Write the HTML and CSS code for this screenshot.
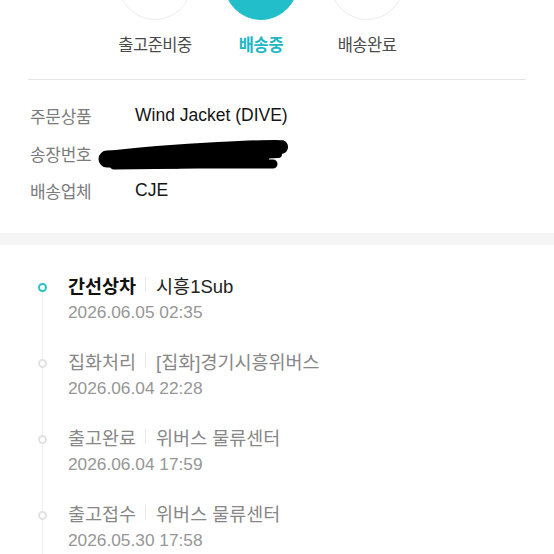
FILE: index.html
```html
<!DOCTYPE html>
<html lang="ko">
<head>
<meta charset="utf-8">
<link rel="stylesheet" href="styles.css">
</head>
<body>
<div class="page">
  <div class="steps">
    <div class="step">
      <div class="circle"></div>
      <div class="step-label">출고준비중</div>
    </div>
    <div class="step">
      <div class="circle active"></div>
      <div class="step-label active">배송중</div>
    </div>
    <div class="step">
      <div class="circle"></div>
      <div class="step-label">배송완료</div>
    </div>
  </div>
  <div class="divider"></div>

  <div class="info">
    <div class="row">
      <div class="label">주문상품</div>
      <div class="value">Wind Jacket (DIVE)</div>
    </div>
    <div class="row">
      <div class="label">송장번호</div>
      <div class="value">
        <svg class="scribble" width="192" height="34" viewBox="0 0 192 34">
          <path d="M9 20 Q60 14 120 11 T183 9" fill="none" stroke="#000" stroke-width="14" stroke-linecap="round"/>
          <path d="M9 21 L80 22" fill="none" stroke="#000" stroke-width="17" stroke-linecap="round"/>
          <path d="M60 22 L165 19" fill="none" stroke="#000" stroke-width="13" stroke-linecap="round"/>
          <path d="M16 27 L100 26 L175 26" fill="none" stroke="#000" stroke-width="9" stroke-linecap="round"/>
          <path d="M120 19 L180 16" fill="none" stroke="#000" stroke-width="8" stroke-linecap="round"/>
        </svg>
      </div>
    </div>
    <div class="row">
      <div class="label">배송업체</div>
      <div class="value">CJE</div>
    </div>
  </div>

  <div class="band"></div>

  <div class="timeline">
    <div class="item current">
      <div class="marker">
        <div class="line-top"></div>
        <div class="dot"></div>
        <div class="line-bottom"></div>
      </div>
      <div class="content">
        <div class="title"><span class="status">간선상차</span><span class="sep"></span><span class="place">시흥1Sub</span></div>
        <div class="date">2026.06.05 02:35</div>
      </div>
    </div>
    <div class="item">
      <div class="marker">
        <div class="line-top"></div>
        <div class="dot"></div>
        <div class="line-bottom"></div>
      </div>
      <div class="content">
        <div class="title"><span class="status">집화처리</span><span class="sep"></span><span class="place">[집화]경기시흥위버스</span></div>
        <div class="date">2026.06.04 22:28</div>
      </div>
    </div>
    <div class="item">
      <div class="marker">
        <div class="line-top"></div>
        <div class="dot"></div>
        <div class="line-bottom"></div>
      </div>
      <div class="content">
        <div class="title"><span class="status">출고완료</span><span class="sep"></span><span class="place">위버스 물류센터</span></div>
        <div class="date">2026.06.04 17:59</div>
      </div>
    </div>
    <div class="item">
      <div class="marker">
        <div class="line-top"></div>
        <div class="dot"></div>
        <div class="line-bottom"></div>
      </div>
      <div class="content">
        <div class="title"><span class="status">출고접수</span><span class="sep"></span><span class="place">위버스 물류센터</span></div>
        <div class="date">2026.05.30 17:58</div>
      </div>
    </div>
  </div>
</div>
</body>
</html>
```

FILE: styles.css
```css
html, body {
  margin: 0;
  padding: 0;
  background: #ffffff;
}

body {
  font-family: "Liberation Sans", "Noto Sans CJK KR", sans-serif;
  color: #111;
  width: 554px;
  height: 554px;
  overflow: hidden;
}

.page {
  width: 554px;
}

/* steps */
.steps {
  display: flex;
  padding-left: 102px;
}

.step {
  width: 106px;
  display: flex;
  flex-direction: column;
  align-items: center;
}

.circle {
  width: 74px;
  height: 74px;
  margin-top: -54px;
  border-radius: 50%;
  border: 1px solid #ececec;
  box-sizing: border-box;
  background: #fff;
}

.circle.active {
  background: #22bfca;
  border-color: #22bfca;
}

.step-label {
  margin-top: 13px;
  font-family: "Noto Sans CJK KR", sans-serif;
  font-size: 16.5px;
  line-height: 22px;
  letter-spacing: -0.5px;
  color: #4a4a4a;
  white-space: nowrap;
}

.step-label.active {
  color: #1db8c4;
  font-weight: 700;
  letter-spacing: -0.3px;
}

.divider {
  margin: 24px 28px 0;
  height: 1px;
  background: #e6e6e6;
}

/* info */
.info {
  padding: 17px 30px 23px;
}

.row {
  display: flex;
  align-items: center;
  height: 37.5px;
}

.label {
  width: 105px;
  font-family: "Noto Sans CJK KR", sans-serif;
  font-size: 17px;
  letter-spacing: -0.3px;
  color: #7c7c7c;
  white-space: nowrap;
}

.value {
  font-size: 17.5px;
  color: #151515;
  display: flex;
  align-items: center;
  white-space: nowrap;
}

.scribble {
  display: block;
  margin-left: -37px;
  margin-top: 3px;
}

.band {
  height: 12px;
  background: #f5f5f5;
}

/* timeline */
.timeline {
  padding-top: 27px;
}

.item {
  display: flex;
}

.marker {
  width: 68px;
  flex: none;
  display: flex;
  flex-direction: column;
  align-items: flex-start;
  padding-left: 38px;
  box-sizing: border-box;
}

.line-top {
  width: 1px;
  height: 11px;
  margin-left: 4px;
  background: #efefef;
}

.current .line-top {
  background: transparent;
}

.dot {
  width: 9px;
  height: 9px;
  border-radius: 50%;
  border: 2px solid #e2e2e2;
  box-sizing: border-box;
  background: #fff;
}

.current .dot {
  border: 2.5px solid #2bc1ca;
}

.line-bottom {
  width: 1px;
  flex: 1;
  margin-left: 4px;
  background: #efefef;
}

.content {
  padding-bottom: 22px;
}

.title {
  display: flex;
  align-items: center;
  height: 26px;
  font-size: 18.5px;
  color: #878787;
  white-space: nowrap;
}

.status {
  font-family: "Noto Sans CJK KR", sans-serif;
  letter-spacing: 0;
}

.current .status {
  font-weight: 700;
  color: #111;
}

.current .place {
  color: #222;
}

.sep {
  display: inline-block;
  width: 1px;
  height: 15px;
  background: #e8e8e8;
  margin: 0 10px 0 9px;
}

.date {
  height: 28px;
  line-height: 28px;
  font-size: 17.3px;
  color: #969696;
}
```
